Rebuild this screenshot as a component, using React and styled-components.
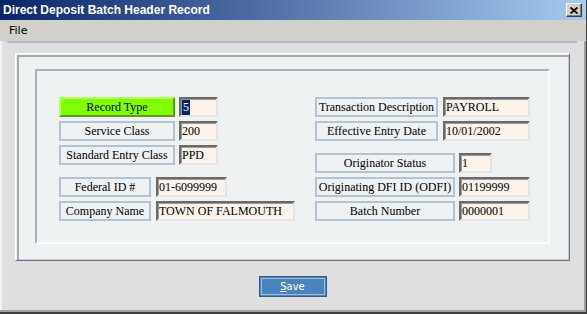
import React from "react";
import styled, { createGlobalStyle } from "styled-components";

const GlobalStyle = createGlobalStyle`
  html, body {
    margin: 0;
    padding: 0;
    background: #dedede;
  }
  * {
    box-sizing: border-box;
  }
`;

const leftTop = [
  { label: "Record Type", value: "5", selected: true, highlight: true },
  { label: "Service Class", value: "200" },
  { label: "Standard Entry Class", value: "PPD" },
];

const leftBottom = [
  { label: "Federal ID #", value: "01-6099999", fieldWidth: 71 },
  { label: "Company Name", value: "TOWN OF FALMOUTH", fieldWidth: 139 },
];

const rightTop = [
  { label: "Transaction Description", value: "PAYROLL" },
  { label: "Effective Entry Date", value: "10/01/2002" },
];

const rightBottom = [
  { label: "Originator Status", value: "1", fieldWidth: 33 },
  { label: "Originating DFI ID (ODFI)", value: "01199999", fieldWidth: 71 },
  { label: "Batch Number", value: "0000001", fieldWidth: 71 },
];

function FieldGroup({ rows, labelWidth, fieldWidth, gap }) {
  return (
    <Group>
      {rows.map((row) => (
        <Row key={row.label} $gap={gap}>
          <Label $width={labelWidth} $highlight={row.highlight}>
            {row.label}
          </Label>
          <Field $width={row.fieldWidth || fieldWidth}>
            {row.selected ? <Selected>{row.value}</Selected> : row.value}
          </Field>
        </Row>
      ))}
    </Group>
  );
}

export default function App() {
  return (
    <>
      <GlobalStyle />
      <Window>
        <TitleBar>
          <TitleText>Direct Deposit Batch Header Record</TitleText>
          <CloseButton>
            <svg width="8" height="7" viewBox="0 0 8 7">
              <path d="M0.5 0.5 L7.5 6.5 M7.5 0.5 L0.5 6.5" stroke="#000" strokeWidth="1.8" />
            </svg>
          </CloseButton>
        </TitleBar>
        <MenuBar>
          <MenuItem>File</MenuItem>
        </MenuBar>
        <MenuRule />
        <Body>
          <Panel>
            <Frame>
              <Columns>
                <Column>
                  <FieldGroup rows={leftTop} labelWidth={116} fieldWidth={39} gap={4} />
                  <FieldGroup rows={leftBottom} labelWidth={92} gap={5} />
                </Column>
                <Column>
                  <FieldGroup rows={rightTop} labelWidth={123} fieldWidth={87} gap={5} />
                  <FieldGroup rows={rightBottom} labelWidth={140} gap={4} />
                </Column>
              </Columns>
            </Frame>
          </Panel>
          <Footer>
            <SaveButton>
              <u>S</u>ave
            </SaveButton>
          </Footer>
        </Body>
      </Window>
    </>
  );
}

const Window = styled.div`
  width: 587px;
  height: 314px;
  display: flex;
  flex-direction: column;
  background: #dfdfdf;
  border-right: 1px solid #404040;
  border-bottom: 2px solid #404040;
  box-shadow: inset -2px -2px 0 #a0a0a0, inset 2px 0 0 #f2f2f2;
`;

const TitleBar = styled.div`
  height: 20px;
  display: flex;
  align-items: center;
  justify-content: space-between;
  padding: 0 4px 0 3px;
  background: linear-gradient(to right, #0a246a, #a6caf0);
`;

const TitleText = styled.div`
  color: #fff;
  font-family: "Liberation Sans", Arial, sans-serif;
  font-weight: bold;
  font-size: 12px;
`;

const CloseButton = styled.div`
  width: 16px;
  height: 14px;
  display: flex;
  align-items: center;
  justify-content: center;
  background: #d4d0c8;
  border: 1px solid;
  border-color: #fff #404040 #404040 #fff;
  box-shadow: inset -1px -1px 0 #808080;
`;

const MenuBar = styled.div`
  height: 21px;
  display: flex;
  align-items: center;
  padding: 0 9px;
  background: #d2d0ca;
`;

const MenuItem = styled.span`
  font-family: "DejaVu Sans", Tahoma, sans-serif;
  font-size: 11px;
  color: #000;
`;

const MenuRule = styled.div`
  height: 2px;
  margin: 0 9px 0 7px;
  background: #a4bcd4;
`;

const Body = styled.div`
  flex: 1;
  display: flex;
  flex-direction: column;
  padding: 10px 16px 0 15px;
`;

const Panel = styled.div`
  height: 208px;
  padding: 15px 19px 16px 19px;
  background: #eef2f2;
  border: 1px solid;
  border-color: #ffffff #707078 #707078 #ffffff;
  box-shadow: inset 1px 1px 0 #eef2f2, inset 3px 3px 0 #a4a8b0,
    inset -1px -1px 0 #c4ccd4;
`;

const Frame = styled.div`
  height: 100%;
  padding: 26px 0 0 22px;
  border: 2px solid;
  border-color: #a8b0bc #fafcfc #fafcfc #a8b0bc;
`;

const Columns = styled.div`
  display: grid;
  grid-template-columns: 256px 1fr;
`;

const Column = styled.div`
  display: flex;
  flex-direction: column;
  gap: 12px;
`;

const Group = styled.div`
  display: flex;
  flex-direction: column;
  gap: 4px;
`;

const Row = styled.div`
  display: flex;
  align-items: center;
  gap: ${({ $gap }) => $gap}px;
  height: 20px;
`;

const Label = styled.div`
  width: ${({ $width }) => $width}px;
  height: 20px;
  display: flex;
  align-items: center;
  justify-content: center;
  font-family: "Liberation Serif", "Times New Roman", serif;
  font-size: 12px;
  color: #000;
  white-space: nowrap;
  background: ${({ $highlight }) => ($highlight ? "#80ff00" : "transparent")};
  border: 2px solid;
  border-color: ${({ $highlight }) =>
    $highlight ? "#b0ff60 #5a9a20 #5a9a20 #b0ff60" : "#b4c2d2"};
`;

const Field = styled.div`
  width: ${({ $width }) => $width}px;
  height: 20px;
  display: flex;
  align-items: center;
  padding-left: 1px;
  font-family: "Liberation Serif", "Times New Roman", serif;
  font-size: 12px;
  color: #000;
  white-space: nowrap;
  overflow: hidden;
  background: #fcf4ea;
  border: 2px solid;
  border-color: #6a6a6a #e4e4e4 #e4e4e4 #6a6a6a;
  box-shadow: inset 1px 1px 0 #9a9a9a;
`;

const Selected = styled.span`
  display: inline-block;
  height: 15px;
  line-height: 15px;
  padding: 0 1px;
  background: #0a246a;
  color: #fff;
`;

const Footer = styled.div`
  display: flex;
  justify-content: center;
  padding-top: 15px;
`;

const SaveButton = styled.button`
  width: 68px;
  height: 21px;
  padding: 0;
  font-family: "DejaVu Sans", Tahoma, sans-serif;
  font-size: 10px;
  color: #fff;
  background: #4a84bc;
  border: 1px solid #2c5c94;
  box-shadow: inset 0 0 0 1px #4a84bc, inset 0 0 0 2px #a8bcd0;
  cursor: pointer;
`;
